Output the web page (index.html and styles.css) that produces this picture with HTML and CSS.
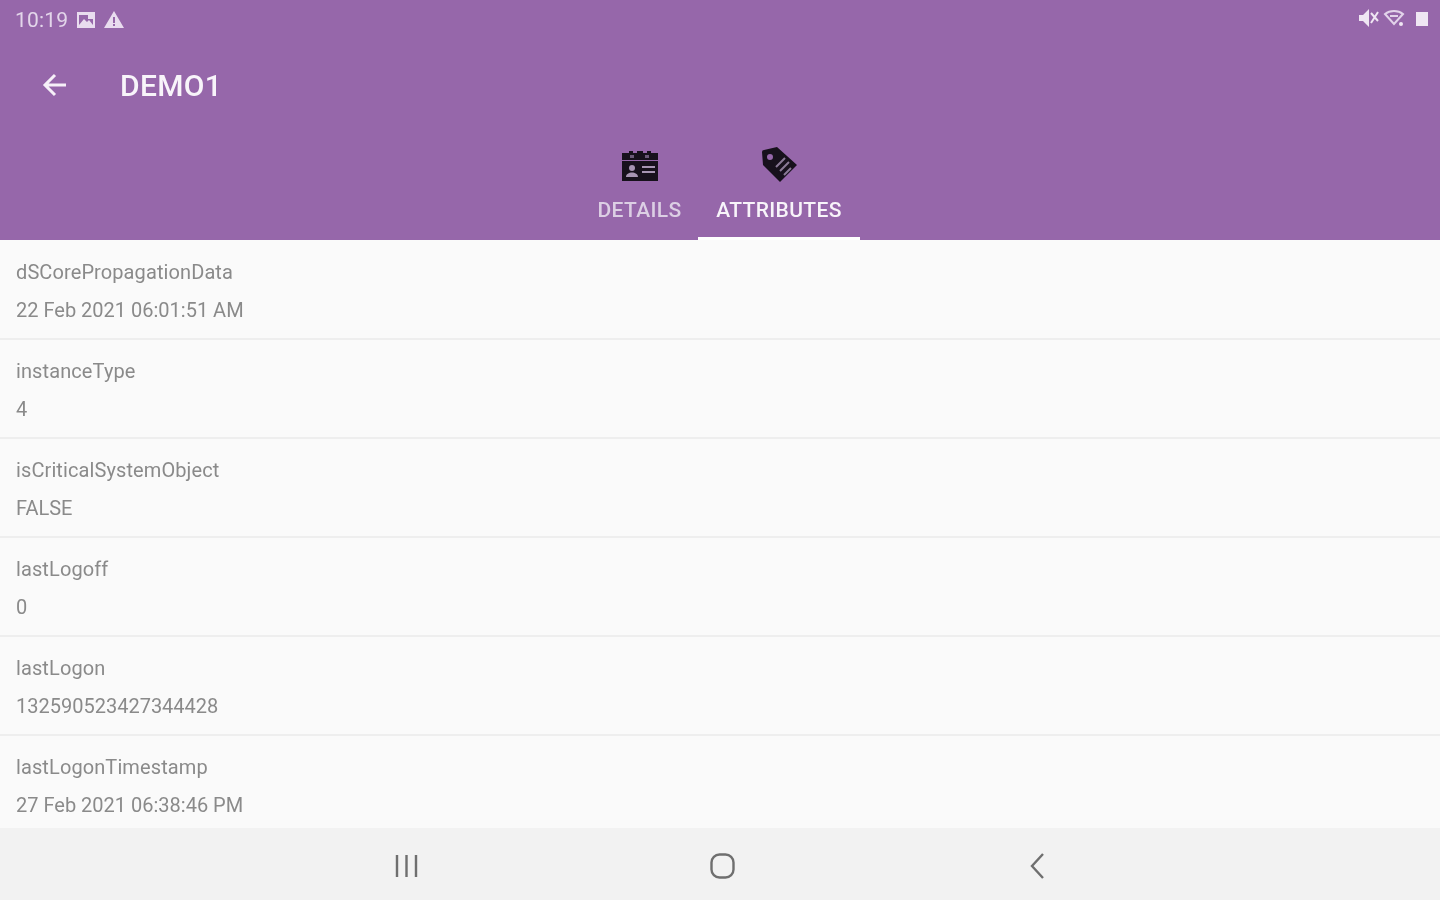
FILE: index.html
```html
<!DOCTYPE html>
<html lang="en">
<head>
<meta charset="utf-8">
<title>DEMO1</title>
<link rel="stylesheet" href="styles.css">
</head>
<body>
<div class="screen">
  <header class="appbar">
    <div class="status">
      <div class="status-left">
        <span class="time">10:19</span>
        <svg class="si" width="20" height="18" viewBox="0 0 20 18"><path fill="#e9dcef" fill-rule="evenodd" d="M1 1h18v16H1zM3 4v10h14V4z"/><path fill="#e9dcef" d="M3 14l5-6 3 3 2-2 4 5zM12 4h5v4h-5z"/></svg>
        <svg class="si" width="20" height="18" viewBox="0 0 20 18"><path fill="#e9dcef" fill-rule="evenodd" d="M10 0l10 17H0zM9 6v6h2V6zM9 13v2h2v-2z"/></svg>
      </div>
      <div class="status-right">
        <svg width="22" height="18" viewBox="0 0 22 18"><path fill="#efe6f3" d="M1 6h4l6-6v18l-6-6H1z"/><path stroke="#efe6f3" stroke-width="2" d="M13 4l7 8M20 3l-7 11"/></svg>
        <svg width="22" height="18" viewBox="0 0 22 18"><path fill="none" stroke="#e2d3ea" stroke-width="2" d="M2 5c5-4 13-4 18 0l-9 10z"/><path stroke="#e2d3ea" stroke-width="2" d="M7 7h8"/><circle cx="18" cy="15" r="2" fill="#efe6f3"/></svg>
        <svg class="battery" width="14" height="18" viewBox="0 0 14 18"><path fill="#efe6f3" d="M1 3h12v14H1z"/></svg>
      </div>
    </div>
    <div class="toolbar">
      <svg class="back" width="26" height="26" viewBox="0 0 26 26"><path fill="none" stroke="#f6f0f8" stroke-width="3" d="M24 13H4M13 3L3 13l10 10"/></svg>
      <h1 class="title">DEMO1</h1>
    </div>
    <nav class="tabs">
      <div class="tab">
        <svg class="tab-icon" width="38" height="32" viewBox="0 0 38 32"><path fill="#17111c" d="M1 3h7V1h4v2h4V1h6v2h4V1h4v2h7v7H1zM1 11h36v20H1z"/><path fill="#6b5a78" d="M9 5h4v3H9zM24 5h4v3h-4z"/><circle cx="11" cy="18" r="3" fill="#a795b3"/><path fill="#a795b3" d="M5 27c0-6 12-6 12 0zM21 16h13v2H21zM21 21h13v2H21z"/></svg>
        <span class="tab-label">DETAILS</span>
      </div>
      <div class="tab active">
        <svg class="tab-icon tag" width="38" height="37" viewBox="0 0 38 37"><path fill="#17111c" fill-rule="evenodd" d="M2 6Q2 4 4 4L17 1 37 19 20 36 3 19zM10 8a3 3 0 100 6 3 3 0 000-6z"/><path stroke="#8a7a96" stroke-width="2" d="M16 21l9-9M20 25l9-9M24 29l7-7"/></svg>
        <span class="tab-label">ATTRIBUTES</span>
      </div>
    </nav>
  </header>
  <main class="list">
    <div class="row"><div class="key">dSCorePropagationData</div><div class="val">22 Feb 2021 06:01:51 AM</div></div>
    <div class="row"><div class="key">instanceType</div><div class="val">4</div></div>
    <div class="row"><div class="key">isCriticalSystemObject</div><div class="val">FALSE</div></div>
    <div class="row"><div class="key">lastLogoff</div><div class="val">0</div></div>
    <div class="row"><div class="key">lastLogon</div><div class="val">132590523427344428</div></div>
    <div class="row"><div class="key">lastLogonTimestamp</div><div class="val">27 Feb 2021 06:38:46 PM</div></div>
  </main>
  <footer class="navbar">
    <svg width="24" height="24" viewBox="0 0 24 24"><path stroke="#6f6f6f" stroke-width="2.400" d="M2 1v22M11.500 1v22M21 1v22"/></svg>
    <svg width="28" height="28" viewBox="0 0 28 28"><rect x="2.500" y="2.500" width="22" height="23" rx="8" fill="none" stroke="#6f6f6f" stroke-width="2.400"/></svg>
    <svg width="24" height="26" viewBox="0 0 24 26"><path fill="none" stroke="#6f6f6f" stroke-width="2.400" d="M18 1L7 13l11 12"/></svg>
  </footer>
</div>
</body>
</html>
```
FILE: styles.css
```css
* { box-sizing: border-box; }
html, body { margin: 0; padding: 0; }
body { font-family: Roboto, "Liberation Sans", sans-serif; }
.screen { width: 1440px; height: 900px; display: flex; flex-direction: column; background: #fafafa; overflow: hidden; filter: blur(0.6px); }
.appbar { height: 240px; flex: none; background: #9667aa; display: flex; flex-direction: column; }
.status { height: 38px; padding: 1px 11px 0 15px; display: flex; justify-content: space-between; align-items: center; }
.status-left { display: flex; align-items: center; gap: 8px; }
.status-right { display: flex; align-items: center; gap: 3px; margin-top: -4px; }
.battery { margin-left: 7px; }
.time { font-size: 21px; letter-spacing: 0.2px; color: #e3d6ea; }
.toolbar { height: 94px; display: flex; align-items: center; padding-left: 42px; }
.back { flex: none; }
.title { margin: 0 0 0 52px; font-size: 30px; font-weight: 500; letter-spacing: 0.3px; color: #f8f4fa; }
.tabs { flex: 1; display: flex; justify-content: center; }
.tab { width: 117px; display: flex; flex-direction: column; align-items: center; justify-content: flex-end; padding: 0 0 18px 1px; }
.tab.active { width: 162px; border-bottom: 3px solid #fff; padding-bottom: 15px; }
.tab-icon { margin-bottom: 16px; }
.tab-icon.tag { margin-bottom: 15px; }
.tab-label { font-size: 21px; font-weight: 500; line-height: 24px; letter-spacing: 0.35px; color: #dccfe4; }
.tab.active .tab-label { color: #f8f4fa; }
.list { flex: 1; min-height: 0; overflow: hidden; padding-top: 1px; }
.row { height: 99px; padding: 18px 16px 0; border-bottom: 2px solid #eeeeee; color: #8a8a8a; font-size: 20px; line-height: 26px; }
.row:last-child { border-bottom: 0; }
.key { margin-bottom: 12px; letter-spacing: 0.1px; }
.navbar { height: 72px; flex: none; background: #f2f2f2; display: flex; align-items: center; padding: 4px 0 0 395px; }
.navbar svg:nth-child(2) { margin-left: 290px; }
.navbar svg:nth-child(3) { margin-left: 288px; }
```
